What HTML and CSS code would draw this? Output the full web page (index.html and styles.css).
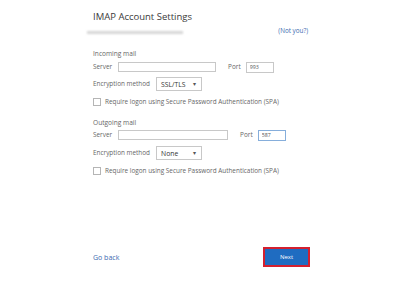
FILE: index.html
```html
<!DOCTYPE html>
<html lang="en">
<head>
    <meta charset="UTF-8">
    <meta name="viewport" content="width=device-width, initial-scale=1.0">
    <title>IMAP Account Settings</title>
    <link rel="stylesheet" href="styles.css">
</head>
<body>
    <div class="page">
        <!-- Header -->
        <h1 class="title">IMAP Account Settings</h1>
        <div class="account">
            <span class="email-blur"></span>
            <a href="#" class="not-you">(Not you?)</a>
        </div>

        <!-- Incoming -->
        <div class="section incoming">
            <div class="section-title">Incoming mail</div>
            <div class="row server-row">
                <label class="lbl">Server</label>
                <input type="text" class="server-in">
                <label class="lbl port-lbl">Port</label>
                <input type="text" class="port-in" value="993">
            </div>
            <div class="row enc-row">
                <label class="lbl">Encryption method</label>
                <div class="select"><span>SSL/TLS</span><span class="arrow">&#9662;</span></div>
            </div>
            <div class="row check-row">
                <span class="checkbox"></span>
                <label class="lbl">Require logon using Secure Password Authentication (SPA)</label>
            </div>
        </div>

        <!-- Outgoing -->
        <div class="section outgoing">
            <div class="section-title">Outgoing mail</div>
            <div class="row server-row">
                <label class="lbl">Server</label>
                <input type="text" class="server-in wide">
                <label class="lbl port-lbl">Port</label>
                <input type="text" class="port-in focused" value="587">
            </div>
            <div class="row enc-row">
                <label class="lbl">Encryption method</label>
                <div class="select"><span>None</span><span class="arrow">&#9662;</span></div>
            </div>
            <div class="row check-row">
                <span class="checkbox"></span>
                <label class="lbl">Require logon using Secure Password Authentication (SPA)</label>
            </div>
        </div>

        <!-- Footer -->
        <div class="footer">
            <a href="#" class="go-back">Go back</a>
            <button class="next">Next</button>
        </div>
    </div>
</body>
</html>
```

FILE: styles.css
```css
body {
    margin: 0;
    padding: 0;
    background: #fff;
    font-family: "Open Sans", "Noto Sans", sans-serif;
    color: #555;
}

.page {
    height: 284px;
    box-sizing: border-box;
    width: 217px;
    margin-left: 93px;
    padding-top: 10px;
    padding-bottom: 17px;
    display: flex;
    flex-direction: column;
}

.title {
    margin: 0;
    font-size: 9.5px;
    font-weight: 500;
    color: #3a3a3a;
    line-height: 14px;
}

.account {
    display: flex;
    justify-content: space-between;
    align-items: center;
    height: 12px;
}

.email-blur {
    display: block;
    width: 96px;
    height: 3px;
    margin-left: -6px;
    margin-top: 4px;
    background: #d6d6d6;
    filter: blur(1px);
}

.not-you {
    color: #3a6ab0;
    text-decoration: none;
    font-size: 6.3px;
    margin-right: 2px;
}

.section {
    display: flex;
    flex-direction: column;
}

.incoming {
    margin-top: 13px;
}

.outgoing {
    margin-top: 8px;
}

.section-title {
    font-size: 6.6px;
    height: 10px;
    line-height: 10px;
    color: #666;
}

.row {
    display: flex;
    align-items: center;
    height: 16px;
}

.lbl {
    font-size: 6.4px;
    line-height: 10px;
    color: #666;
    white-space: nowrap;
}

.outgoing .server-row {
    margin-top: -1px;
}

.row .server-in {
    margin-left: 6px;
    width: 98px;
    height: 10px;
    box-sizing: border-box;
    border: 1px solid #c8c8c8;
    padding: 0;
}

.row .server-in.wide {
    width: 110px;
}

.port-lbl {
    margin-left: 12px;
}

.port-in {
    margin-left: 5px;
    width: 28px;
    height: 11px;
    box-sizing: border-box;
    border: 1px solid #c8c8c8;
    padding: 0 3px;
    font-family: inherit;
    font-size: 5.3px;
    color: #555;
    outline: none;
}

.port-in.focused {
    border-color: #86aedb;
}

.enc-row {
    margin-top: 1px;
}

.outgoing .enc-row {
    margin-top: 2px;
}

.check-row {
    margin-top: 2px;
}

.select {
    margin-left: 6px;
    width: 46px;
    height: 14px;
    box-sizing: border-box;
    border: 1px solid #c8c8c8;
    display: flex;
    align-items: center;
    justify-content: space-between;
    padding: 0 5px 0 4px;
    font-size: 6.8px;
    color: #333;
}

.arrow {
    font-size: 6px;
    color: #555;
}

.checkbox {
    width: 6px;
    height: 6px;
    border: 1px solid #b5b5b5;
    margin-right: 4px;
}

.footer {
    margin-top: auto;
    display: flex;
    justify-content: space-between;
    align-items: center;
}

.go-back {
    color: #3a6ab0;
    text-decoration: none;
    font-size: 7px;
}

.next {
    width: 47px;
    height: 20px;
    background-color: #1f6cc1;
    border: 2px solid #d4202f;
    color: #fff;
    font-family: inherit;
    font-size: 6px;
    padding: 0;
    margin-right: 0;
}
```
